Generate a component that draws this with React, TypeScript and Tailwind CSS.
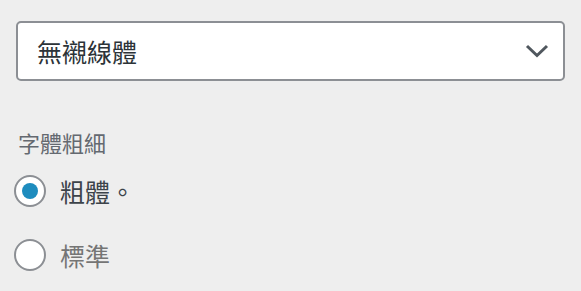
import React from "react";

export default function App() {
  const font = { fontFamily: '"Noto Sans CJK TC", "Noto Sans", sans-serif' };
  return (
    <div lang="zh-Hant-TW" className="w-[581px] h-[291px] bg-[#eeeeee] overflow-hidden relative" style={font}>
      <div className="absolute left-[18px] top-[-30px] text-[22px] leading-[32px] text-[#646970]">字體家族系列選擇</div>
      <div className="pt-[21px] pl-[16px]">
        <div className="w-[549px] h-[60px] bg-white border-2 border-[#8c8f94] rounded-[5px] flex items-center justify-between pl-[19px] pr-[14px]">
          <span className="text-[25px] text-[#2c3338] leading-none">無襯線體</span>
          <svg width="24" height="14" viewBox="0 0 24 14" fill="none">
            <path d="M2 2 L12 11.5 L22 2" stroke="#50575e" strokeWidth="3" strokeLinecap="butt" />
          </svg>
        </div>
      </div>
      <div className="pl-[18px] mt-[45px] text-[22px] leading-[32px] text-[#646970]">字體粗細</div>
      <div className="pl-[14px] mt-[17px] flex flex-col gap-[32px]">
        <div className="flex items-center gap-[14px]">
          <div className="w-[32px] h-[32px] rounded-full border-2 border-[#8c8f94] bg-white flex items-center justify-center">
            <div className="w-[16px] h-[16px] rounded-full bg-[#1e8cbe]" />
          </div>
          <span className="text-[25px] leading-none text-[#3c434a]">粗體。</span>
        </div>
        <div className="flex items-center gap-[14px]">
          <div className="w-[32px] h-[32px] rounded-full border-2 border-[#8c8f94] bg-white" />
          <span className="text-[25px] leading-none text-[#757575]">標準</span>
        </div>
      </div>
    </div>
  );
}
